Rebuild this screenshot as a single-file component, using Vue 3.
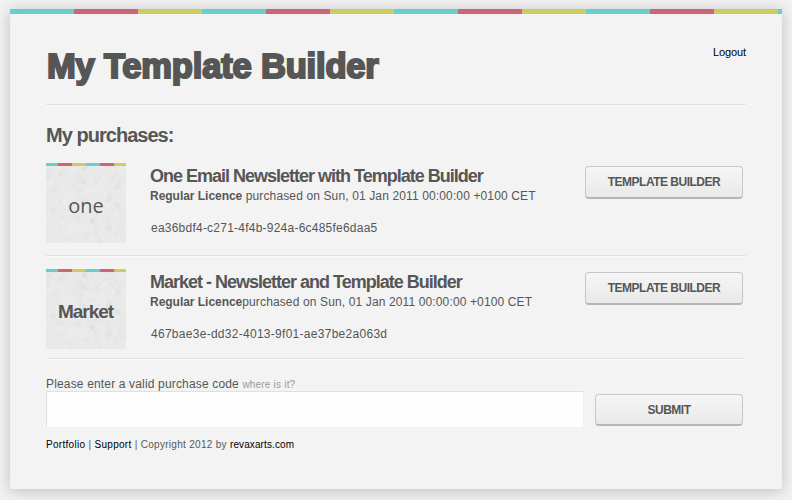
<script setup>
const purchases = [
  {
    id: 1,
    label: 'one',
    kind: 'one',
    title: 'One Email Newsletter with Template Builder',
    gap: true,
    date: 'purchased on Sun, 01 Jan 2011 00:00:00 +0100 CET',
    code: 'ea36bdf4-c271-4f4b-924a-6c485fe6daa5'
  },
  {
    id: 2,
    label: 'Market',
    kind: 'market',
    title: 'Market - Newsletter and Template Builder',
    gap: false,
    date: 'purchased on Sun, 01 Jan 2011 00:00:00 +0100 CET',
    code: '467bae3e-dd32-4013-9f01-ae37be2a063d'
  }
]

// Mottled paper texture: seeded translucent squares on the thumbnail
let seed = 41
const rand = () => {
  seed = (seed * 16807) % 2147483647
  return seed / 2147483647
}
const tiles = []
for (let i = 0; i < 190; i++) {
  const size = 4 + Math.floor(rand() * 3)
  tiles.push({
    x: Math.floor(rand() * 20) * 4,
    y: Math.floor(rand() * 20) * 4,
    size,
    fill: rand() > 0.4 ? '#ffffff' : '#c8c8c8',
    opacity: (0.03 + rand() * 0.09).toFixed(2)
  })
}
</script>

<template>
  <div class="page">
    <main class="card">
      <div class="stripes"></div>
      <div class="content">
        <header class="header">
          <h1 class="logo">My Template Builder</h1>
          <a class="logout">Logout</a>
        </header>
        <h2 class="heading">My purchases:</h2>
        <section v-for="p in purchases" :key="p.id" class="item" :class="p.kind">
          <div class="thumb">
            <svg class="texture" width="80" height="80" viewBox="0 0 80 80">
              <rect width="80" height="80" fill="#e9e9e9" />
              <rect
                v-for="(t, i) in tiles" :key="i" :x="t.x" :y="t.y"
                :width="t.size" :height="t.size" :fill="t.fill" :opacity="t.opacity"
              />
              <g shape-rendering="crispEdges">
                <rect width="12" height="3" fill="#66cfce" />
                <rect x="12" width="14" height="3" fill="#cd6577" />
                <rect x="26" width="14" height="3" fill="#cecb63" />
                <rect x="40" width="14" height="3" fill="#66cfce" />
                <rect x="54" width="14" height="3" fill="#cd6577" />
                <rect x="68" width="12" height="3" fill="#cecb63" />
              </g>
            </svg>
            <span class="name">{{ p.label }}</span>
          </div>
          <div class="info">
            <h3 class="title">{{ p.title }}</h3>
            <p class="licence"><strong>Regular Licence</strong><template v-if="p.gap">&nbsp;</template>{{ p.date }}</p>
            <p class="code">{{ p.code }}</p>
          </div>
          <button class="btn">TEMPLATE BUILDER</button>
        </section>
        <form class="form" @submit.prevent>
          <label class="label" for="code">Please enter a valid purchase code <small class="hint">where is it?</small></label>
          <div class="row">
            <input id="code" class="input" type="text" />
            <button class="btn submit">SUBMIT</button>
          </div>
        </form>
        <footer class="footer"><a>Portfolio</a> | <a>Support</a> | Copyright 2012 by <a class="site">revaxarts.com</a></footer>
      </div>
    </main>
  </div>
</template>

<style>
body {
  background: #f2f2f2;
}
</style>

<style scoped>
.page {
  box-sizing: border-box;
  height: 500px;
  padding: 9px 10px 11px;
  overflow: hidden;
  background: #f2f2f2;
  color: #565656;
  font: 12px/14px "Liberation Sans", Arial, sans-serif;
}
.card {
  height: 480px;
  background: #f3f3f3;
  box-shadow: 0 2px 14px rgba(0, 0, 0, 0.22);
}
.stripes {
  height: 5px;
  background: repeating-linear-gradient(90deg, #66cfce 0 64px, #cd6577 64px 128px, #cecb63 128px 192px);
}
.content {
  padding: 0 36px;
}
h1, h2, h3, p {
  margin: 0;
}
.header {
  box-sizing: border-box;
  display: flex;
  justify-content: space-between;
  height: 92px;
  padding: 32px 0 0;
  border-bottom: 1px solid #fafafa;
  box-shadow: inset 0 -1px #e0e0e0;
}
.logo {
  padding-left: 1px;
  font: bold 34.5px/41px "Liberation Sans", Arial, sans-serif;
  letter-spacing: -0.17px;
  -webkit-text-stroke: 2.1px #565656;
  white-space: nowrap;
}
.logout {
  font-size: 11px;
  line-height: 13px;
  letter-spacing: -0.1px;
  color: #000;
}
.heading {
  height: 57px;
  padding-top: 17px;
  box-sizing: border-box;
  font-size: 20px;
  line-height: 24px;
  letter-spacing: -0.97px;
}
.item {
  display: flex;
  align-items: flex-start;
  box-sizing: border-box;
  height: 94px;
  margin-bottom: 12px;
  border-bottom: 1px solid #fafafa;
  box-shadow: inset 0 -1px #e0e0e0;
}
.item.market {
  height: 91px;
  margin-bottom: 0;
}
.thumb {
  display: grid;
  width: 80px;
  height: 80px;
  margin-right: 24px;
}
.texture, .name {
  grid-area: 1 / 1;
}
.name {
  place-self: center;
  padding-top: 5px;
}
.one .name {
  font: 20px/24px "Open Sans", "Noto Sans", sans-serif;
}
.market .name {
  padding-right: 1px;
  font-weight: bold;
  font-size: 19px;
  line-height: 24px;
  letter-spacing: -1px;
}
.info {
  flex: 1;
  white-space: nowrap;
}
.title {
  padding-top: 2px;
  font-size: 18px;
  line-height: 23px;
  letter-spacing: -1px;
}
.licence {
  padding-top: 1px;
  line-height: 14px;
  letter-spacing: 0.13px;
}
.licence strong {
  letter-spacing: -0.03px;
}
.code {
  padding: 18px 0 0 1px;
  letter-spacing: 0.23px;
}
.market .code {
  letter-spacing: 0.28px;
}
.btn {
  box-sizing: border-box;
  width: 158px;
  height: 33px;
  margin: 3px 3px 0 0;
  padding: 0;
  border: 1px solid #c8c8c8;
  border-bottom: 2px solid #b5b5b5;
  border-radius: 4px;
  background: linear-gradient(#f6f6f6, #e9e9e9);
  color: #565656;
  font: bold 12px/14px "Liberation Sans", Arial, sans-serif;
  letter-spacing: -0.5px;
}
.form {
  padding-top: 17px;
}
.label {
  display: block;
  height: 14px;
  letter-spacing: 0.16px;
}
.hint {
  font-size: 10px;
  letter-spacing: 0.2px;
  color: #999;
}
.row {
  display: flex;
  gap: 12px;
}
.input {
  box-sizing: border-box;
  width: 537px;
  height: 36px;
  padding: 0 8px;
  border: 0;
  border-top: 1px solid #e0e0e0;
  border-left: 1px solid #e0e0e0;
  background: #fefefe;
}
.submit {
  width: 148px;
  height: 32px;
  margin-right: 0;
}
.footer {
  padding-top: 11px;
  font-size: 10px;
  letter-spacing: 0.3px;
  white-space: nowrap;
}
.footer a {
  color: #000;
}
.footer .site {
  letter-spacing: 0.1px;
}
</style>
